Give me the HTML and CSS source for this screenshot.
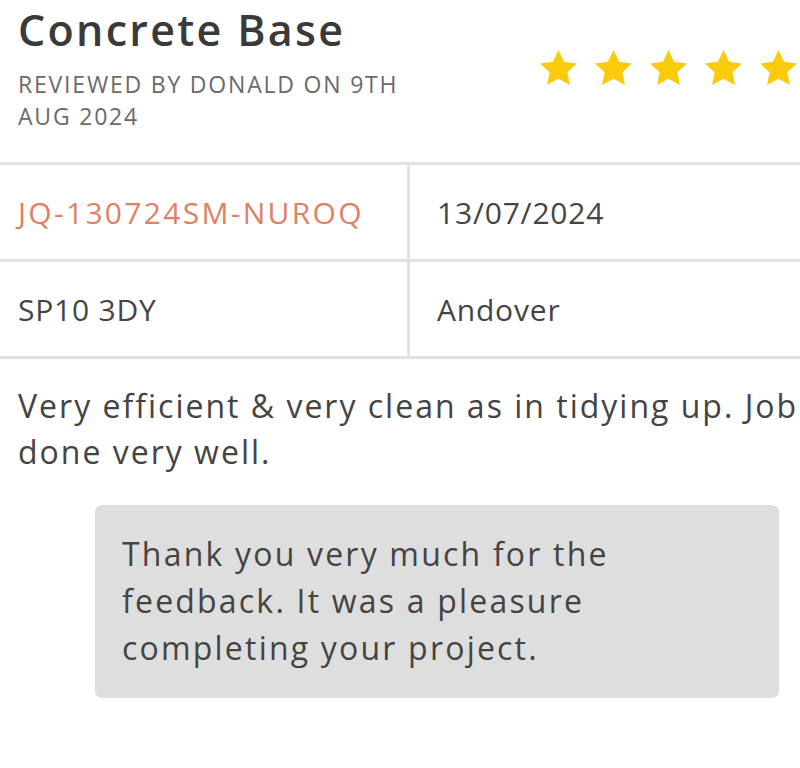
FILE: index.html
```html
<!DOCTYPE html>
<html lang="en">
<head>
<meta charset="utf-8">
<title>Review</title>
<link rel="stylesheet" href="styles.css">
</head>
<body>
<div class="review">
  <div class="header">
    <div class="meta">
      <h1 class="title">Concrete Base</h1>
      <p class="byline">REVIEWED BY DONALD ON 9TH AUG 2024</p>
    </div>
    <div class="stars">
      <svg class="star" viewBox="1.7 1.8 20.6 19.6"><path d="M12 1.8l3.1 6.6 7.2.9-5.3 5 1.4 7.1L12 17.9l-6.4 3.5L7 14.3l-5.3-5 7.2-.9z"/></svg>
      <svg class="star" viewBox="1.7 1.8 20.6 19.6"><path d="M12 1.8l3.1 6.6 7.2.9-5.3 5 1.4 7.1L12 17.9l-6.4 3.5L7 14.3l-5.3-5 7.2-.9z"/></svg>
      <svg class="star" viewBox="1.7 1.8 20.6 19.6"><path d="M12 1.8l3.1 6.6 7.2.9-5.3 5 1.4 7.1L12 17.9l-6.4 3.5L7 14.3l-5.3-5 7.2-.9z"/></svg>
      <svg class="star" viewBox="1.7 1.8 20.6 19.6"><path d="M12 1.8l3.1 6.6 7.2.9-5.3 5 1.4 7.1L12 17.9l-6.4 3.5L7 14.3l-5.3-5 7.2-.9z"/></svg>
      <svg class="star" viewBox="1.7 1.8 20.6 19.6"><path d="M12 1.8l3.1 6.6 7.2.9-5.3 5 1.4 7.1L12 17.9l-6.4 3.5L7 14.3l-5.3-5 7.2-.9z"/></svg>
    </div>
  </div>

  <div class="details">
    <div class="cell cell-left ref">JQ-130724SM-NUROQ</div>
    <div class="cell cell-right">13/07/2024</div>
    <div class="cell cell-left">SP10 3DY</div>
    <div class="cell cell-right">Andover</div>
  </div>

  <p class="comment">Very efficient &amp; very clean as in tidying up. Job done very well.</p>

  <div class="reply">
    <p class="reply-text">Thank you very much for the feedback. It was a pleasure completing your project.</p>
  </div>
</div>
</body>
</html>
```

FILE: styles.css
```css
* { box-sizing: border-box; }

body {
  margin: 0;
  background: #ffffff;
  font-family: "Open Sans", "Noto Sans", sans-serif;
  color: #444444;
  overflow: hidden;
}

.review {
  width: 800px;
}

.header {
  display: flex;
  padding-left: 18px;
}

.meta {
  width: 400px;
  flex-shrink: 0;
}

.title {
  margin: 0;
  padding-top: 4px;
  font-size: 43px;
  line-height: 52px;
  font-weight: 600;
  letter-spacing: 2.3px;
  color: #3a3a3a;
}

.byline {
  margin: 12px 0 0;
  font-size: 23px;
  line-height: 32px;
  letter-spacing: 1.8px;
  color: #6a6a6a;
  font-weight: 400;
}

.stars {
  display: flex;
  gap: 18px;
  padding-top: 50px;
  padding-left: 122px;
}

.star {
  width: 37px;
  height: 35px;
  flex-shrink: 0;
  fill: #fbca0b;
}

.details {
  display: grid;
  grid-template-columns: 410px 1fr;
  margin-top: 30px;
  border-top: 3px solid #e2e2e2;
}

.cell {
  height: 97px;
  display: flex;
  align-items: center;
  font-size: 30px;
  letter-spacing: 0.8px;
  color: #444444;
  border-bottom: 3px solid #e2e2e2;
}

.cell-left {
  padding-left: 18px;
  border-right: 3px solid #e2e2e2;
}

.cell-right {
  padding-left: 27px;
}

.ref {
  color: #e08066;
  letter-spacing: 2.3px;
}

.comment {
  margin: 24px 0 0;
  padding-left: 18px;
  width: 800px;
  font-size: 32px;
  line-height: 46px;
  letter-spacing: 2px;
  color: #444444;
}

.reply {
  margin: 30px 21px 0 95px;
  background: #dedede;
  border-radius: 7px;
  padding: 25px 110px 27px 27px;
}

.reply-text {
  margin: 0;
  font-size: 32px;
  line-height: 47px;
  letter-spacing: 2.2px;
  color: #444444;
}
```
